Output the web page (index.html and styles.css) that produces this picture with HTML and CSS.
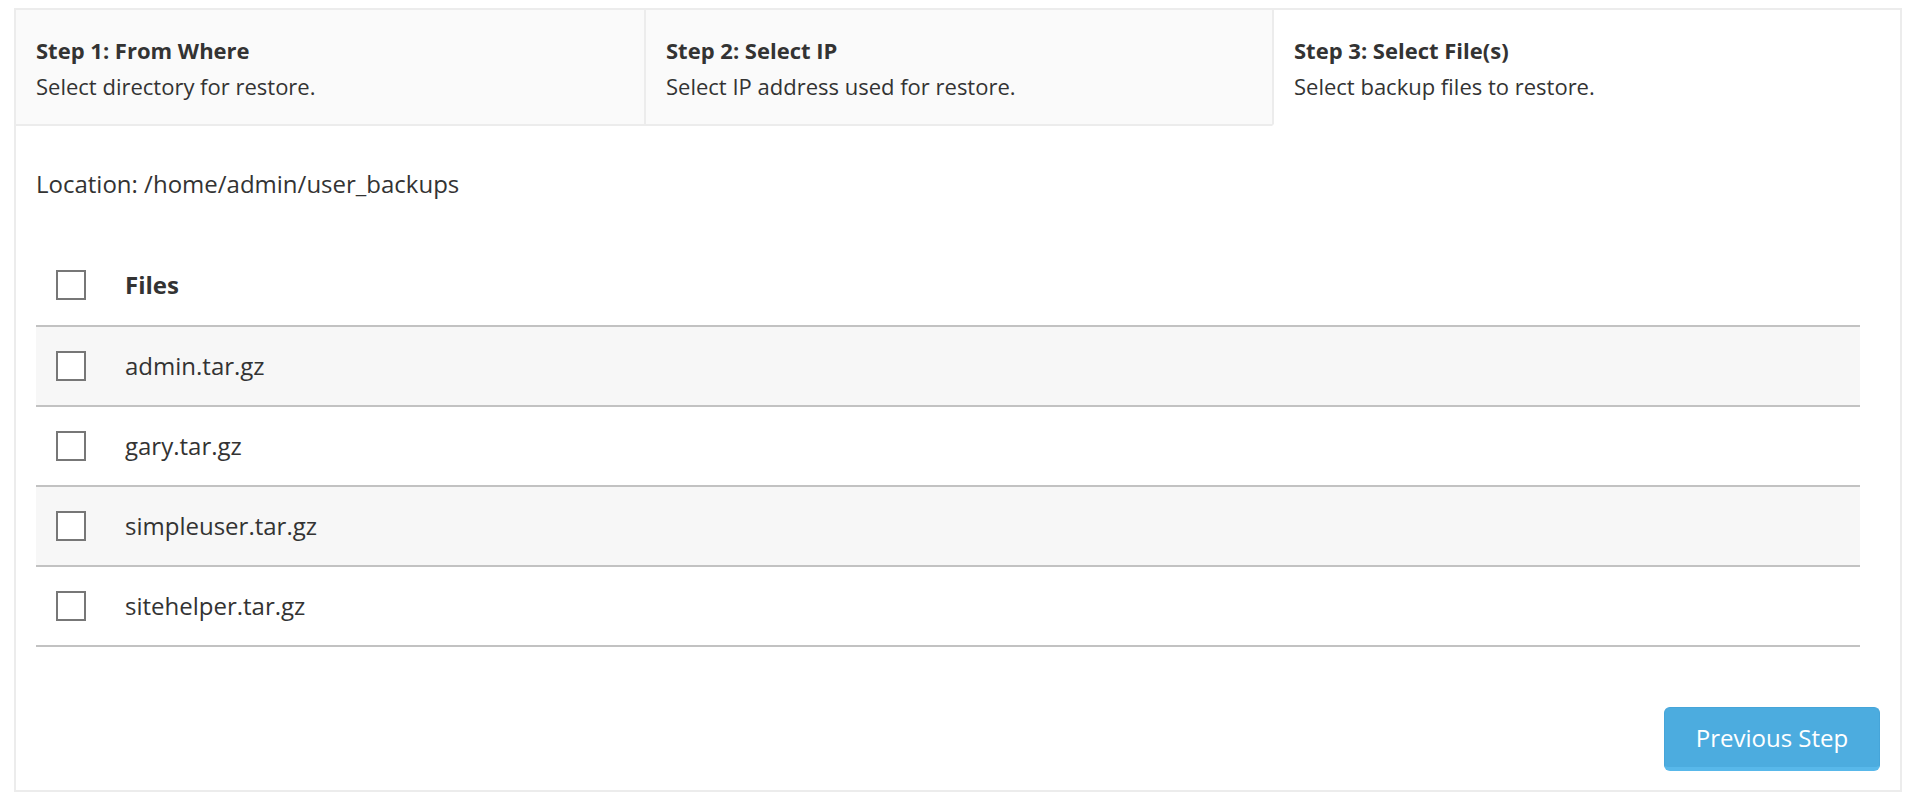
FILE: index.html
```html
<!DOCTYPE html>
<html lang="en">
<head>
<meta charset="utf-8">
<title>Restore</title>
<link rel="stylesheet" href="styles.css">
</head>
<body>
<div class="panel">
  <div class="steps">
    <div class="step">
      <div class="step-title">Step 1: From Where</div>
      <div class="step-desc">Select directory for restore.</div>
    </div>
    <div class="step">
      <div class="step-title">Step 2: Select IP</div>
      <div class="step-desc">Select IP address used for restore.</div>
    </div>
    <div class="step active">
      <div class="step-title">Step 3: Select File(s)</div>
      <div class="step-desc">Select backup files to restore.</div>
    </div>
  </div>
  <div class="panel-body">
    <div class="location">Location: /home/admin/user_backups</div>
    <div class="files">
      <div class="row head"><span class="check"></span><span class="name">Files</span></div>
      <div class="row striped"><span class="check"></span><span class="name">admin.tar.gz</span></div>
      <div class="row"><span class="check"></span><span class="name">gary.tar.gz</span></div>
      <div class="row striped"><span class="check"></span><span class="name">simpleuser.tar.gz</span></div>
      <div class="row"><span class="check"></span><span class="name">sitehelper.tar.gz</span></div>
    </div>
    <div class="actions">
      <button class="btn" type="button">Previous Step</button>
    </div>
  </div>
</div>
</body>
</html>
```
FILE: styles.css
```css
html, body {
  background: #ffffff;
}
body {
  margin: 8px 4px 0 14px;
  font-family: "Open Sans", "Noto Sans", "Liberation Sans", sans-serif;
  font-size: 22px;
  line-height: 30px;
  color: #333333;
}
.panel {
  border: 2px solid #ececec;
}
.steps {
  display: grid;
  grid-template-columns: 1fr 1fr 1fr;
}
.step {
  background: #fafafa;
  padding: 25px 20px 23px;
  border-bottom: 2px solid #ececec;
}
.step + .step {
  border-left: 2px solid #ececec;
}
.step.active {
  background: #ffffff;
  border-bottom-color: #ffffff;
}
.step-title {
  font-weight: 700;
  margin-bottom: 6px;
}
.panel-body {
  padding: 43px 20px 19px;
  font-size: 24px;
}
.location {
  height: 30px;
  line-height: 30px;
}
.files {
  margin: 46px 20px 0 0;
}
.row {
  display: flex;
  align-items: center;
  gap: 39px;
  height: 78px;
  padding-left: 20px;
  border-bottom: 2px solid #c2c2c2;
}
.row.head {
  height: 80px;
  font-weight: 700;
}
.row.striped {
  background: #f7f7f7;
}
.check {
  width: 30px;
  height: 30px;
  box-sizing: border-box;
  border: 2px solid #777777;
  background: #ffffff;
  flex: none;
}
.actions {
  display: flex;
  justify-content: flex-end;
  margin-top: 60px;
}
.btn {
  width: 216px;
  height: 64px;
  box-sizing: border-box;
  font-family: "Open Sans", "Noto Sans", "Liberation Sans", sans-serif;
  font-size: 24px;
  color: #ffffff;
  background: #4cacdf;
  border: 1px solid #46a5d9;
  border-bottom: 4px solid #58b8ea;
  border-radius: 6px;
  padding: 0;
  cursor: pointer;
}
```
